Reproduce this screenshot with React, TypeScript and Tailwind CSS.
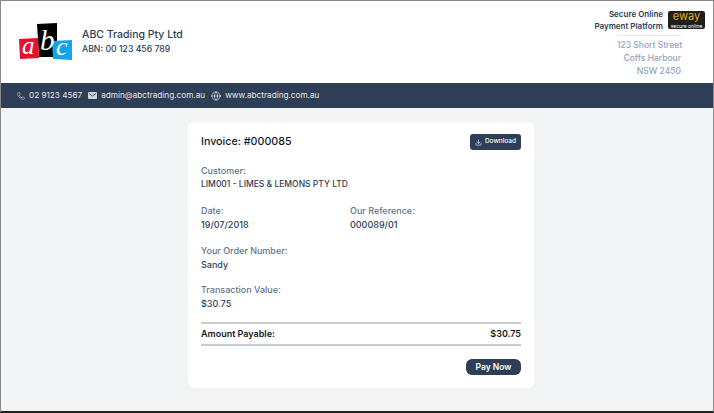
import { Download, Globe, Phone } from "lucide-react";

function Logo() {
  return (
    <svg width="54" height="37" viewBox="0 0 54 37" className="shrink-0 overflow-visible">
      <polygon points="18,1 38,0 38,34 20,34" fill="#000" />
      <polygon points="0,16 19,15 20,35 1,36" fill="#e8112d" />
      <polygon points="33,18 53,17 53,37 34,36" fill="#12a5ee" />
      <text x="3" y="31" fontFamily="Liberation Serif, serif" fontStyle="italic" fontSize="25" fill="#fff">a</text>
      <text x="21" y="27" fontFamily="Liberation Serif, serif" fontStyle="italic" fontSize="29" fill="#fff">b</text>
      <text x="37" y="32" fontFamily="Liberation Serif, serif" fontStyle="italic" fontSize="26" fill="#fff">c</text>
    </svg>
  );
}

function MailIcon() {
  return (
    <svg width="9" height="7" viewBox="0 0 9 7" className="mr-[4px] ml-[6px] shrink-0">
      <rect width="9" height="7" rx="1" fill="#cbd5e1" />
      <path d="M1 1.5 L4.5 4 L8 1.5" fill="none" stroke="#2d3e56" strokeWidth="0.8" />
    </svg>
  );
}

function Eway() {
  return (
    <div className="flex h-[18px] w-[37px] flex-col items-center rounded-[2px] bg-[#1f1f1f] leading-none">
      <span className="h-[12px] text-[11px] leading-[10px] text-[#e0a526]">eway</span>
      <span className="text-[5px] leading-[6px] text-white">secure online</span>
    </div>
  );
}

function Field({ label, value, small }: { label: string; value: string; small?: boolean }) {
  return (
    <div className="text-[9px] leading-[13px]">
      <div className="font-medium text-[#64748b]">{label}</div>
      <div className={small ? "mt-[1px] text-[8.5px] font-medium text-[#2d3e56]" : "mt-[1px] font-medium text-[#2d3e56]"}>{value}</div>
    </div>
  );
}

export default function App() {
  return (
    <div className="flex h-[413px] w-[714px] flex-col overflow-hidden border-x border-t border-b-2 border-x-[#8a8a8a] border-t-[#8a8a8a] border-b-[#222] bg-[#f3f4f6] font-['Inter',sans-serif]">
      <header className="flex h-[82px] items-start justify-between bg-white pl-[18px] pr-[8px]">
        <div className="flex items-center gap-[9px] pt-[22px]">
          <Logo />
          <div>
            <div className="text-[10.5px] leading-[14px] font-medium text-[#2d3e56]">ABC Trading Pty Ltd</div>
            <div className="text-[8.7px] leading-[14px] font-medium text-[#2d3e56]">ABN: 00 123 456 789</div>
          </div>
        </div>
        <div className="flex flex-col items-end pt-[7px]">
          <div className="flex items-center gap-[5px]">
            <div className="text-right text-[8px] leading-[12px] font-semibold text-[#2d3e56]">
              <div>Secure Online</div>
              <div>Payment Platform</div>
            </div>
            <Eway />
          </div>
          <div className="mt-[3px] mr-[24px] w-[64px] border-t border-[#e5e7eb] pt-[3px] text-right text-[8.5px] leading-[13px] font-medium text-[#94a3b8]">
            <div className="whitespace-nowrap">123 Short Street</div>
            <div className="whitespace-nowrap">Coffs Harbour</div>
            <div className="whitespace-nowrap">NSW 2450</div>
          </div>
        </div>
      </header>
      <div className="flex h-[25px] items-center bg-[#2d3e56] pl-[16px] text-[8.2px] text-[#e5e7eb]">
        <Phone size={8} strokeWidth={1.5} className="mr-[4px]" />
        <span>02 9123 4567</span>
        <MailIcon />
        <span>admin@abctrading.com.au</span>
        <Globe size={10} strokeWidth={1.5} className="mr-[4px] ml-[6px]" />
        <span>www.abctrading.com.au</span>
      </div>
      <main className="flex flex-1 pt-[14px] pl-[187px]">
        <div className="h-[266px] w-[346px] rounded-[6px] bg-white px-[13px] pt-[12px]">
          <div className="flex h-[16px] items-center justify-between">
            <div className="text-[10.7px] font-medium text-[#111827]">Invoice: #000085</div>
            <button className="flex h-[16px] w-[51px] items-center justify-center gap-[3px] rounded-[3px] bg-[#2d3e56] text-[6.5px] font-medium text-white">
              <Download size={7} />
              Download
            </button>
          </div>
          <div className="mt-[14px]">
            <Field label="Customer:" value="LIM001 - LIMES & LEMONS PTY LTD" small />
          </div>
          <div className="mt-[13px] grid grid-cols-[149px_1fr]">
            <Field label="Date:" value="19/07/2018" />
            <Field label="Our Reference:" value="000089/01" />
          </div>
          <div className="mt-[13px]">
            <Field label="Your Order Number:" value="Sandy" />
          </div>
          <div className="mt-[12px]">
            <Field label="Transaction Value:" value="$30.75" />
          </div>
          <div className="mt-[12px] flex h-[24px] items-center justify-between border-y-2 border-[#c8cdd4] text-[9px] font-semibold text-[#111827]">
            <span>Amount Payable:</span>
            <span>$30.75</span>
          </div>
          <div className="mt-[13px] flex justify-end">
            <button className="h-[16px] w-[55px] rounded-[6px] bg-[#2d3e56] text-[8.5px] font-semibold text-white">Pay Now</button>
          </div>
        </div>
      </main>
    </div>
  );
}
